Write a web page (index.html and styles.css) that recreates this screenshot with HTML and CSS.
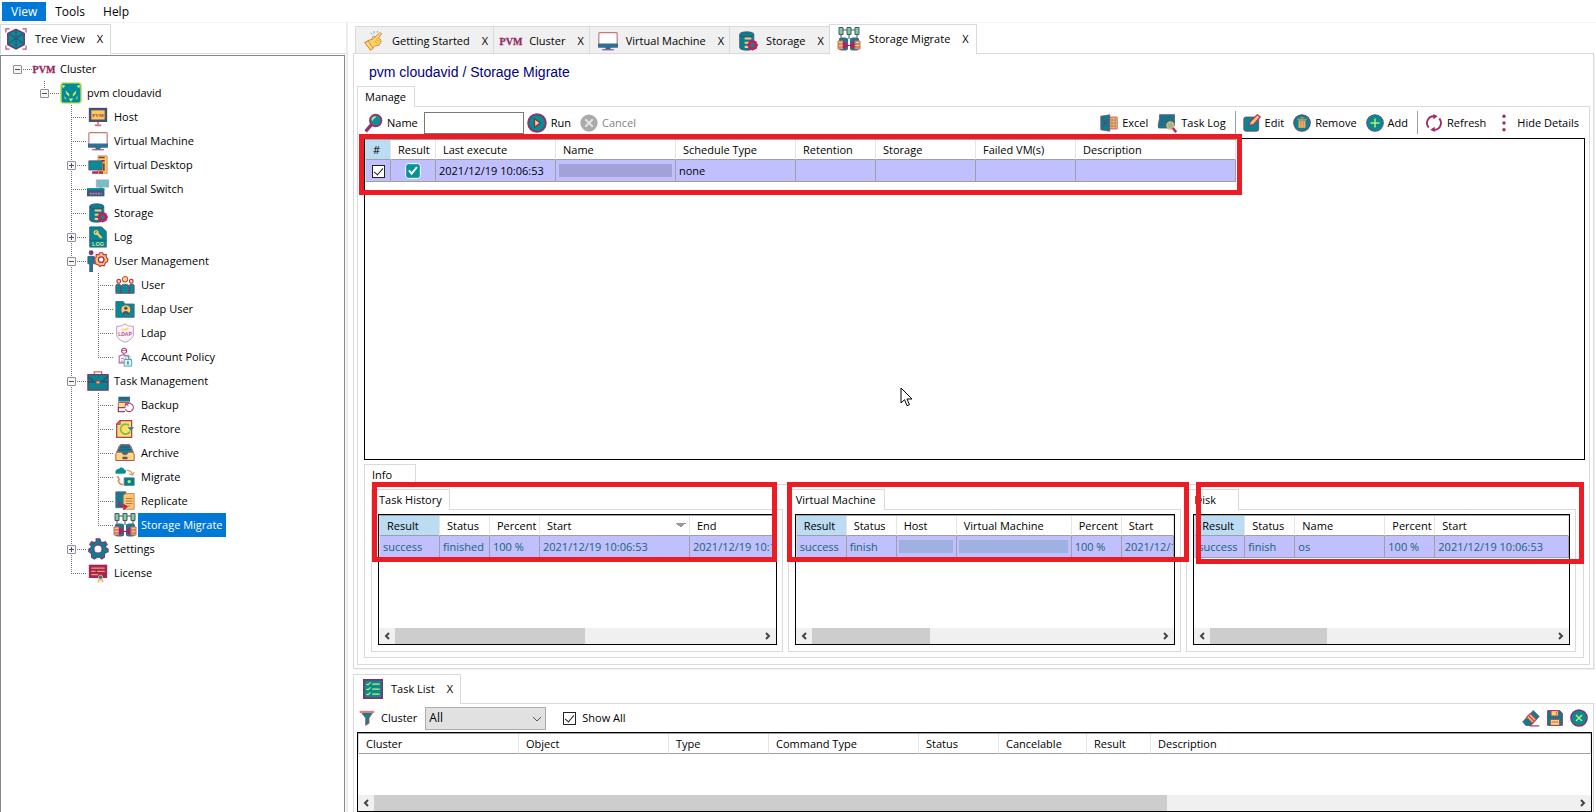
FILE: index.html
```
<!DOCTYPE html>
<html lang="en">
<head>
<meta charset="utf-8">
<title>Storage Migrate</title>
<link rel="stylesheet" href="styles.css">
</head>
<body>
<svg class="defs" aria-hidden="true">
  <symbol id="cube" viewBox="0 0 24 24"><path d="M12 1.500 21 6v12l-9 5-9-5V6z" fill="#078c96" stroke="#7b2b66" stroke-width="1.500"/><path d="M3 6l9 5 9-5M12 1.500V23M4 17l8-6 8 6" fill="none" stroke="#3f4f7d" stroke-width="1.300"/><path d="M1 5V1h4M19 1h4v4M23 19v4h-4M5 23H1v-4" fill="none" stroke="#b5507a" stroke-width="1.300"/></symbol>
  <symbol id="pvm" viewBox="0 0 24 24"><text x="12" y="16" text-anchor="middle" font-family="Liberation Serif" font-weight="700" font-size="10" fill="#962a63" stroke="#962a63" stroke-width=".3">PVM</text></symbol>
  <symbol id="cat" viewBox="0 0 24 24"><rect x="1" y="1" width="22" height="22" rx="2.500" fill="#028c94" stroke="#c9e265" stroke-width="1.500"/><path d="M2 3l4 1-3 3zM22 3l-4 1 3 3zM6 9l4 4v3l-3-3zM18 9l-4 4v3l3-3zM9.500 18h5L12 21.500zM5 15l2 4-2-1zM19 15l-2 4 2-1z" fill="#d6e76a"/></symbol>
  <symbol id="host" viewBox="0 0 24 24"><rect x="1" y="1" width="22" height="17" fill="#45516f"/><rect x="4" y="4" width="16" height="11" fill="#ffc85f"/><text x="12" y="12" text-anchor="middle" font-family="Liberation Serif" font-weight="700" font-size="6" fill="#963255">PVM</text><path d="M12 18v3M8 22h8" stroke="#c479a1" stroke-width="2"/></symbol>
  <symbol id="monitor" viewBox="0 0 24 24"><rect x="1" y="2" width="22" height="17" rx="1" fill="#fff" stroke="#c9767b" stroke-width="1.400"/><path d="M0 15h24v5H0z" fill="#317094"/><path d="M9 19h6v3H9z" fill="#067f91"/><path d="M5 22.500h14" stroke="#a94375" stroke-width="1.400"/></symbol>
  <symbol id="desktop" viewBox="0 0 24 24"><path d="M12 1h11v21H12z" fill="#ffc95c" stroke="#d18a55"/><path d="M13 3h7M16 7h4M19 10v9" stroke="#733b60" stroke-width="2"/><path d="M1 7h16v11H1z" fill="#048e98" stroke="#7c426e"/><path d="M5 21h7M13 21h5" stroke="#b12855" stroke-width="3"/></symbol>
  <symbol id="switch" viewBox="0 0 24 24"><path d="M10 2h14v8h-8v4h-2v-4h-4z" fill="#77bdc4" stroke="#bf9fc4" stroke-width=".5"/><path d="M0 12h19v8H0z" fill="#3b5a81"/><path d="M3 17h13" stroke="#d7799c" stroke-width="2" stroke-dasharray="2 1"/><path d="M0 12h19" stroke="#058e98" stroke-width="2"/></symbol>
  <symbol id="storage" viewBox="0 0 24 24"><path d="M2 4c0-4 17-4 17 0v16c0 4-17 4-17 0z" fill="#077f8d" stroke="#4e587c"/><path d="M2 5c2 3 15 3 17 0" fill="none" stroke="#493f6f"/><path d="M8 9h8M8 14h6M8 19h5" stroke="#ffc877" stroke-width="2.500"/><circle cx="17.500" cy="17" r="4.500" fill="#287989" stroke="#c31f61" stroke-width="2.800"/><path d="M17.500 10.500v13M11 17h13M13 12.500l9 9M22 12.500l-9 9" stroke="#c31f61" stroke-width="1.500"/><circle cx="17.500" cy="17" r="2.500" fill="#267b8b"/></symbol>
  <symbol id="log" viewBox="0 0 24 24"><path d="M3 1h13l5 5v17H3z" fill="#048890" stroke="#375978"/><path d="M10 7l6 6" stroke="#ffc66b" stroke-width="2.400"/><circle cx="10" cy="7" r="2" fill="none" stroke="#ffc66b" stroke-width="1.500"/><path d="M3 16h18" stroke="#285f75"/><text x="12" y="22" text-anchor="middle" font-family="Liberation Sans" font-weight="700" font-size="6" fill="#cce98a">LOG</text></symbol>
  <symbol id="gear" viewBox="0 0 24 24"><path d="M10 1h4l1 3 2 1 3-1 2 3-2 2 1 2 2 1v3l-3 1-1 2v3l-3 2-2-2h-3l-3 2-3-2v-3l-1-2-2-1v-3l2-1 1-2-2-2 2-3 3 1 2-1z" fill="#087f92" stroke="#7d3972" stroke-width="1.300"/><circle cx="12" cy="12" r="4.500" fill="#fff" stroke="#7d3972" stroke-width="1.300"/></symbol>
  <symbol id="usergear" viewBox="0 0 24 24"><circle cx="4.500" cy="3" r="2.600" fill="#7d3772"/><path d="M1 7h7v8H6v9H3v-9H1z" fill="#117e91" stroke="#55517c"/><path d="M14 3h3l1 2h3v3l2 2-1 3-2 1-1 3h-3l-2 1-2-2-3-1v-3l-1-2 2-2V5h3z" fill="#ffc466" stroke="#bb3155" stroke-width="1.200"/><circle cx="15.500" cy="10.500" r="3" fill="#fff" stroke="#a72c61" stroke-width="1.400"/></symbol>
  <symbol id="users" viewBox="0 0 24 24"><path d="M7 22v-8c0-4 10-4 10 0v8zM1 20v-7c0-3 6-3 6 0v9H1zM17 22v-9c0-3 6-3 6 0v9z" fill="#078b94" stroke="#833b66"/><circle cx="12" cy="5" r="3.200" fill="#ffdb79" stroke="#c65252" stroke-width="1.300"/><circle cx="4.500" cy="7.500" r="2.300" fill="#ffdb79" stroke="#b3345f" stroke-width="1.300"/><circle cx="19.500" cy="7.500" r="2.300" fill="#ffdb79" stroke="#b3345f" stroke-width="1.300"/></symbol>
  <symbol id="folder" viewBox="0 0 24 24"><path d="M1 3h9l2 3h11v16H1z" fill="#058994" stroke="#466583"/><circle cx="13" cy="13" r="6" fill="#ffc66a" stroke="#49566b"/><path d="M9 18c0-5 8-5 8 0z" fill="#355b76"/><circle cx="13" cy="11" r="2" fill="#355b76"/></symbol>
  <symbol id="shield" viewBox="0 0 24 24"><path d="M2 4c5 0 7-1 10-3 3 2 5 3 10 3v9c0 5-4 8-10 10C6 21 2 18 2 13z" fill="#faf5fa" stroke="#b78bad"/><text x="12" y="15" text-anchor="middle" font-family="Liberation Sans" font-weight="700" font-size="6" fill="#bb4e92">LDAP</text><path d="M8 8h6l2-2" fill="none" stroke="#fbd765" stroke-width="2"/></symbol>
  <symbol id="policy" viewBox="0 0 24 24"><circle cx="11" cy="4.500" r="3" fill="#fff" stroke="#b23c78" stroke-width="1.300"/><path d="M8 4h6" stroke="#b23c78"/><path d="M5 19v-8l5-2 6 2v8z" fill="#fff" stroke="#b45f99" stroke-width="1.300"/><path d="M7 14h4M7 17h3M11 9v3" stroke="#b45f99"/><path d="M13 15v-3c0-3 5-3 5 0v3" fill="none" stroke="#58a6ae"/><path d="M11 15h9v8h-9z" fill="#d6f1f3" stroke="#389ba7"/><path d="M15.500 17v4" stroke="#389ba7" stroke-width="2"/></symbol>
  <symbol id="brief" viewBox="0 0 24 24"><path d="M8 5V2h8v3" fill="none" stroke="#d56861" stroke-width="1.500"/><path d="M1 5h22v17H1z" fill="#08858f" stroke="#74386e" stroke-width="1.400"/><path d="M1 7l7 6h8l7-6M8 13H1M16 13h7" fill="none" stroke="#34496c" stroke-width="1.500"/><path d="M10 12h4v3h-4z" fill="#ffbf6b" stroke="#a34752"/></symbol>
  <symbol id="backup" viewBox="0 0 24 24"><path d="M4 2h14v6H4z" fill="#28788a"/><path d="M5 4h12" stroke="#3d4f72" stroke-width="2" stroke-dasharray="2 1"/><path d="M4 9h13v6H4z" fill="#ffe278" stroke="#9c3a6c"/><path d="M12 15H4v5h8" fill="none" stroke="#9c3a6c" stroke-width="1.500"/><path d="M13 12a5 5 0 1 1-.5 5M12 14l1-4 3 3" fill="#fff" stroke="#b93e72" stroke-width="1.300"/></symbol>
  <symbol id="restore" viewBox="0 0 24 24"><path d="M6 2h14v20H2V6z" fill="#ffe069" stroke="#b13c5d" stroke-width="1.500"/><path d="M2 6h4V2" fill="none" stroke="#b13c5d" stroke-width="1.500"/><path d="M17 8a6 6 0 1 0 1 7" fill="none" stroke="#79bd51" stroke-width="2"/><path d="M15 10h8l-4 4z" fill="#178d97"/></symbol>
  <symbol id="archive" viewBox="0 0 24 24"><path d="M5 4l2-2h10l2 2 3 7-3 4H5l-3-4z" fill="#1c7d8f" stroke="#65476f"/><path d="M6 5h12M5 8h14" stroke="#354c72"/><path d="M3 11h5l2 3h4l2-3h5l2 2v8H1v-8z" fill="#ffd977" stroke="#b9525d" stroke-width="1.200"/><path d="M9 18h6" stroke="#58556c" stroke-width="3"/><path d="M7 1L2 11M17 1l5 10" stroke="#c77b65"/></symbol>
  <symbol id="migrate" viewBox="0 0 24 24"><path d="M1 8c-2-4 2-6 4-6 2-3 6-1 6 1 3 0 3 5 0 5z" fill="#078e96"/><path d="M14 4c4 0 6 1 7 5m-4-1l4 2 2-4" fill="none" stroke="#da9c59" stroke-width="1.400"/><path d="M3 11l2 4-1 2c2 4 3 4 6 4" fill="none" stroke="#d68f69" stroke-width="2"/><path d="M11 13h12v9H11z" fill="#047f88" stroke="#49768e"/><circle cx="17" cy="17.500" r="2" fill="#bbed78"/></symbol>
  <symbol id="replicate" viewBox="0 0 24 24"><path d="M1 1h12v19H1z" fill="#187a8e" stroke="#546080"/><path d="M10 5l3-2h10v19H10z" fill="#ffc66b" stroke="#c27c5c"/><path d="M13 9h8M13 12h8M13 15h8M13 18h5" stroke="#a66b55"/><path d="M5 13c0 5 2 6 8 6m-3-3l4 3-4 3" fill="none" stroke="#b71e55" stroke-width="1.800"/></symbol>
  <symbol id="smigrate" viewBox="0 0 24 24"><path d="M4 3h16M4 8v4M12 8v4M20 8v4" stroke="#48516c"/><path d="M2 .5h4v7H2zM10 .5h4v7h-4zM18 .5h4v7h-4z" fill="#79cf98" stroke="#49546e"/><path d="M2 12c0-2 9-2 9 0v10c0 2-9 2-9 0zM13 12c0-2 9-2 9 0v10c0 2-9 2-9 0z" fill="#2c708b"/><path d="M1 14h5v8H1zM18 14h5v8h-5z" fill="#ffbd77" stroke="#bb765c"/><path d="M1 17h5M1 20h5M18 17h5M18 20h5" stroke="#a55f59"/><path d="M6 14l5 4h2l4-4v8l-4-3h-2l-5 3z" fill="#c51558"/></symbol>
  <symbol id="license" viewBox="0 0 24 24"><path d="M1 2h22v16H1z" fill="#a62458"/><path d="M4 6h16M4 10h5M11 10h9M4 14h8" stroke="#eea065" stroke-width="1.500"/><path d="M12 23l3-6 3 6" fill="none" stroke="#f2b15e" stroke-width="2"/><circle cx="15" cy="17" r="2.500" fill="#317489" stroke="#f4bd6a"/></symbol>
  <symbol id="hand" viewBox="0 0 24 24"><path d="M1 14l5-3 4-1 8-7c2-2 4 0 2 2l-3 4c3 0 4 2 3 5l-2 3-5 1-5 5z" fill="#ffd35c" stroke="#d88949" stroke-width="1.200"/><path d="M1 14l4-2 6 9-3 2z" fill="#ffdb72" stroke="#d6773f"/><path d="M9 10l2-4 3 1M13 12l3 3M15 10l3 3" fill="none" stroke="#d88949"/><path d="M8 2l2 2M12 0v3M16 0v2" stroke="#46a4b3"/></symbol>
  <symbol id="search" viewBox="0 0 24 24"><path d="M2 22l7-8" stroke="#9b2d68" stroke-width="4"/><circle cx="14" cy="9" r="7" fill="#118d93" stroke="#963469" stroke-width="2"/><path d="M10 9c0-3 2-4 4-4" fill="none" stroke="#bde992" stroke-width="2"/></symbol>
  <symbol id="run" viewBox="0 0 24 24"><circle cx="12" cy="12" r="10.500" fill="#058c94" stroke="#88396e" stroke-width="2.500"/><path d="M9 7l7 5-7 5z" fill="#ffd26a" stroke="#833255" stroke-width="1.500"/></symbol>
  <symbol id="cancel" viewBox="0 0 24 24"><circle cx="12" cy="12" r="11.500" fill="#aaa"/><path d="M7 7l10 10M17 7L7 17" stroke="#e4e4e4" stroke-width="2.500"/></symbol>
  <symbol id="excel" viewBox="0 0 24 24"><path d="M12 4h11v16H12z" fill="#ffc46d" stroke="#a5525e"/><path d="M12 8h10M12 12h10M12 16h10M16 4v16M20 4v16" stroke="#b76b52"/><path d="M1 3l12-2v22L1 21z" fill="#087f8c" stroke="#9a3a70"/><path d="M4 8l6 8M10 8l-6 8" stroke="#704068" stroke-width="1.500"/></symbol>
  <symbol id="tasklog" viewBox="0 0 24 24"><path d="M3 2h18v13l-4 3H2c-2-3 2-10 1-16z" fill="#1c748a" stroke="#5a5880"/><path d="M5 6h13M4 10h13M4 14h10" stroke="#3a6184"/><circle cx="16" cy="15" r="4" fill="#86bca5" stroke="#efb065" stroke-width="2"/><path d="M19 18l4 5" stroke="#ba2c5b" stroke-width="3"/></symbol>
  <symbol id="edit" viewBox="0 0 24 24"><rect x="1" y="4" width="20" height="19" rx="3" fill="#09858f" stroke="#85386e"/><path d="M8 15l2-5L19 1l4 3-9 10z" fill="#ffc573" stroke="#b13159" stroke-width="1.500"/></symbol>
  <symbol id="trash" viewBox="0 0 24 24"><circle cx="12" cy="12" r="11" fill="#07848f" stroke="#65496f" stroke-width="1.500"/><path d="M8 9h8v9H8zM6 7h12M10 5h4" fill="#ffc66b" stroke="#d99c5f" stroke-width="1.500"/><path d="M10.500 9v8M13.500 9v8" stroke="#9d5457"/></symbol>
  <symbol id="add" viewBox="0 0 24 24"><circle cx="12" cy="12" r="11" fill="#058b93" stroke="#65506f" stroke-width="1.500"/><path d="M12 6v12M6 12h12" stroke="#c4ea69" stroke-width="2"/></symbol>
  <symbol id="refresh" viewBox="0 0 24 24"><path d="M5 18A9 9 0 0 1 12 3M19 6a9 9 0 0 1-7 15" fill="none" stroke="#a02c6b" stroke-width="2.500"/><path d="M11 0l6 3-6 4zM13 17v7l-6-3z" fill="#a02c6b"/></symbol>
  <symbol id="dots" viewBox="0 0 24 24"><circle cx="12" cy="3" r="2.300" fill="#a02c6b"/><circle cx="12" cy="12" r="2.300" fill="#a02c6b"/><circle cx="12" cy="21" r="2.300" fill="#a02c6b"/></symbol>
  <symbol id="tasks" viewBox="0 0 24 24"><rect x="1" y="1" width="22" height="22" fill="#078a90" stroke="#80306e" stroke-width="2"/><path d="M4 6l2 1 3-3M4 12l2 1 3-3M4 18l2 1 3-3M11 6h9M11 12h9M11 18h9" fill="none" stroke="#d0eb65" stroke-width="1.500"/></symbol>
  <symbol id="filter" viewBox="0 0 24 24"><path d="M2 2h20l-7 10v8l-5 3V12z" fill="#107f8e" stroke="#a6516f" stroke-width="1.300"/><path d="M1 3h22" stroke="#df8075" stroke-width="3"/></symbol>
  <symbol id="eraser" viewBox="0 0 24 24"><path d="M1 17L15 2l8 8-11 12H5z" fill="#0a7e8e" stroke="#69476e"/><path d="M6 11l8 8 5-5-8-8z" fill="#ffc568" stroke="#c04e58" stroke-width="1.500"/><path d="M9 9l7 7M10 22.500h13" stroke="#b53b65" stroke-width="1.500"/></symbol>
  <symbol id="save" viewBox="0 0 24 24"><path d="M1 1h18l4 4v18H1z" fill="#057f8d" stroke="#743c6c" stroke-width="1.500"/><path d="M6 1h11v8H6zM5 14h14v9H5z" fill="#ffd06e" stroke="#a44162" stroke-width="1.500"/><path d="M14 3v4M7 18h10" stroke="#c16b5b" stroke-width="1.500"/></symbol>
  <symbol id="close" viewBox="0 0 24 24"><circle cx="12" cy="12" r="10.800" fill="#068b93" stroke="#84366b" stroke-width="2"/><path d="M8 8l8 8M16 8l-8 8" stroke="#bfe870" stroke-width="2"/></symbol>
  <symbol id="ok" viewBox="0 0 24 24"><rect x="1" y="1" width="22" height="22" rx="4" fill="#0a9297" stroke="#fff" stroke-width="1.500"/><path d="M6 11l4 5 8-10" fill="none" stroke="#fff" stroke-width="3"/></symbol>
  <symbol id="left" viewBox="0 0 8 8"><path d="M6 1L3 4l3 3" fill="none" stroke="#444" stroke-width="2"/></symbol>
  <symbol id="right" viewBox="0 0 8 8"><path d="M2 1l3 3-3 3" fill="none" stroke="#444" stroke-width="2"/></symbol>
</svg>

<nav class="menubar">
  <button class="menu menu-on">View</button>
  <button class="menu">Tools</button>
  <button class="menu">Help</button>
</nav>

<div class="workspace">
  <aside class="side">
    <div class="tabs">
      <div class="tab tab-on"><svg class="i22"><use href="#cube"/></svg><span>Tree View</span><button class="x" aria-label="Close Tree View">X</button></div>
    </div>
    <div class="tree">
      <ul class="root">
        <li>
          <div class="node"><button class="exp" aria-label="Collapse Cluster"></button><svg class="i24"><use href="#pvm"/></svg><span>Cluster</span></div>
          <ul>
            <li>
              <div class="node"><button class="exp" aria-label="Collapse pvm cloudavid"></button><svg class="i22"><use href="#cat"/></svg><span>pvm cloudavid</span></div>
              <ul>
                <li><div class="node"><i></i><svg class="i20"><use href="#host"/></svg><span>Host</span></div></li>
                <li><div class="node"><i></i><svg class="i20"><use href="#monitor"/></svg><span>Virtual Machine</span></div></li>
                <li><div class="node"><button class="exp plus" aria-label="Expand Virtual Desktop"></button><svg class="i20"><use href="#desktop"/></svg><span>Virtual Desktop</span></div></li>
                <li><div class="node"><i></i><svg class="i22"><use href="#switch"/></svg><span>Virtual Switch</span></div></li>
                <li><div class="node"><i></i><svg class="i20"><use href="#storage"/></svg><span>Storage</span></div></li>
                <li><div class="node"><button class="exp plus" aria-label="Expand Log"></button><svg class="i22"><use href="#log"/></svg><span>Log</span></div></li>
                <li>
                  <div class="node"><button class="exp" aria-label="Collapse User Management"></button><svg class="i22"><use href="#usergear"/></svg><span>User Management</span></div>
                  <ul>
                    <li><div class="node"><i></i><svg class="i20"><use href="#users"/></svg><span>User</span></div></li>
                    <li><div class="node"><i></i><svg class="i20"><use href="#folder"/></svg><span>Ldap User</span></div></li>
                    <li><div class="node"><i></i><svg class="i20"><use href="#shield"/></svg><span>Ldap</span></div></li>
                    <li><div class="node"><i></i><svg class="i20"><use href="#policy"/></svg><span>Account Policy</span></div></li>
                  </ul>
                </li>
                <li>
                  <div class="node"><button class="exp" aria-label="Collapse Task Management"></button><svg class="i22"><use href="#brief"/></svg><span>Task Management</span></div>
                  <ul>
                    <li><div class="node"><i></i><svg class="i20"><use href="#backup"/></svg><span>Backup</span></div></li>
                    <li><div class="node"><i></i><svg class="i20"><use href="#restore"/></svg><span>Restore</span></div></li>
                    <li><div class="node"><i></i><svg class="i20"><use href="#archive"/></svg><span>Archive</span></div></li>
                    <li><div class="node"><i></i><svg class="i20"><use href="#migrate"/></svg><span>Migrate</span></div></li>
                    <li><div class="node"><i></i><svg class="i20"><use href="#replicate"/></svg><span>Replicate</span></div></li>
                    <li><div class="node"><i></i><svg class="i24"><use href="#smigrate"/></svg><span class="picked">Storage Migrate</span></div></li>
                  </ul>
                </li>
                <li><div class="node"><button class="exp plus" aria-label="Expand Settings"></button><svg class="i22"><use href="#gear"/></svg><span>Settings</span></div></li>
                <li><div class="node"><i></i><svg class="i20"><use href="#license"/></svg><span>License</span></div></li>
              </ul>
            </li>
          </ul>
        </li>
      </ul>
    </div>
  </aside>

  <main class="content">
    <section class="editor">
      <div class="tabs editor-tabs">
        <div class="tab"><svg class="i20"><use href="#hand"/></svg><span>Getting Started</span><button class="x" aria-label="Close Getting Started">X</button></div>
        <div class="tab tight"><svg class="i24"><use href="#pvm"/></svg><span>Cluster</span><button class="x" aria-label="Close Cluster">X</button></div>
        <div class="tab"><svg class="i20"><use href="#monitor"/></svg><span>Virtual Machine</span><button class="x" aria-label="Close Virtual Machine">X</button></div>
        <div class="tab"><svg class="i20"><use href="#storage"/></svg><span>Storage</span><button class="x" aria-label="Close Storage">X</button></div>
        <div class="tab tab-on"><svg class="i24"><use href="#smigrate"/></svg><span>Storage Migrate</span><button class="x" aria-label="Close Storage Migrate">X</button></div>
      </div>
      <div class="page">
        <h1>pvm cloudavid / Storage Migrate</h1>
        <div class="subtabs"><div class="subtab manage">Manage</div></div>
        <div class="panel">
          <div class="toolbar">
            <svg class="i20"><use href="#search"/></svg>
            <label for="name">Name</label>
            <input id="name" class="field" type="text">
            <button class="tool"><svg class="i20"><use href="#run"/></svg>Run</button>
            <button class="tool off" disabled><svg class="i18"><use href="#cancel"/></svg>Cancel</button>
            <div class="spacer"></div>
            <button class="tool"><svg class="i18"><use href="#excel"/></svg>Excel</button>
            <button class="tool"><svg class="i20"><use href="#tasklog"/></svg>Task Log</button>
            <div class="rule"></div>
            <button class="tool"><svg class="i18"><use href="#edit"/></svg>Edit</button>
            <button class="tool"><svg class="i18"><use href="#trash"/></svg>Remove</button>
            <button class="tool"><svg class="i18"><use href="#add"/></svg>Add</button>
            <div class="rule"></div>
            <button class="tool"><svg class="i18"><use href="#refresh"/></svg>Refresh</button>
            <button class="tool"><svg class="i18"><use href="#dots"/></svg>Hide Details</button>
          </div>
          <div class="marked grow">
            <div class="list">
              <table class="fit">
                <colgroup><col class="c25"><col class="c45"><col class="c120"><col class="c120"><col class="c120"><col class="c80"><col class="c100"><col class="c100"><col class="c160"></colgroup>
                <thead><tr><th class="sorted">#</th><th>Result</th><th>Last execute</th><th>Name</th><th>Schedule Type</th><th>Retention</th><th>Storage</th><th>Failed VM(s)</th><th>Description</th></tr></thead>
                <tbody><tr><td class="mid"><input class="check" type="checkbox" checked aria-label="Select row"></td><td class="mid"><svg class="i16"><use href="#ok"/></svg></td><td>2021/12/19 10:06:53</td><td><div class="mask"></div></td><td>none</td><td></td><td></td><td></td><td></td></tr></tbody>
              </table>
            </div>
            <div class="mark mark-main"></div>
          </div>
          <div class="subtabs info-tabs"><div class="subtab info">Info</div></div>
          <div class="groups">
            <section class="group marked">
              <div class="subtabs"><div class="subtab history">Task History</div></div>
              <div class="group-body">
                <div class="list teal">
                  <table>
                    <colgroup><col class="c60"><col class="c50"><col class="c50"><col class="c150"><col></colgroup>
                    <thead><tr><th class="sorted">Result</th><th>Status</th><th>Percent</th><th class="desc">Start</th><th>End</th></tr></thead>
                    <tbody><tr><td>success</td><td>finished</td><td>100 %</td><td>2021/12/19 10:06:53</td><td>2021/12/19 10:1</td></tr></tbody>
                  </table>
                  <div class="scroll"><button aria-label="Scroll left"><svg class="i8"><use href="#left"/></svg></button><div class="track"><div class="thumb half"></div></div><button aria-label="Scroll right"><svg class="i8"><use href="#right"/></svg></button></div>
                </div>
              </div>
              <div class="mark mark-history"></div>
            </section>
            <section class="group marked">
              <div class="subtabs"><div class="subtab vm">Virtual Machine</div></div>
              <div class="group-body">
                <div class="list teal">
                  <table>
                    <colgroup><col class="c50"><col class="c50"><col class="c60"><col class="c115"><col class="c50"><col></colgroup>
                    <thead><tr><th class="sorted">Result</th><th>Status</th><th>Host</th><th>Virtual Machine</th><th>Percent</th><th>Start</th></tr></thead>
                    <tbody><tr><td>success</td><td>finish</td><td><div class="mask blue"></div></td><td><div class="mask blue"></div></td><td>100 %</td><td>2021/12/1</td></tr></tbody>
                  </table>
                  <div class="scroll"><button aria-label="Scroll left"><svg class="i8"><use href="#left"/></svg></button><div class="track"><div class="thumb third"></div></div><button aria-label="Scroll right"><svg class="i8"><use href="#right"/></svg></button></div>
                </div>
              </div>
              <div class="mark mark-vm"></div>
            </section>
            <section class="group marked">
              <div class="subtabs"><div class="subtab disk">Disk</div></div>
              <div class="group-body">
                <div class="list teal">
                  <table>
                    <colgroup><col class="c50"><col class="c50"><col class="c90"><col class="c50"><col></colgroup>
                    <thead><tr><th class="sorted">Result</th><th>Status</th><th>Name</th><th>Percent</th><th>Start</th></tr></thead>
                    <tbody><tr><td>success</td><td>finish</td><td>os</td><td>100 %</td><td>2021/12/19 10:06:53</td></tr></tbody>
                  </table>
                  <div class="scroll"><button aria-label="Scroll left"><svg class="i8"><use href="#left"/></svg></button><div class="track"><div class="thumb third"></div></div><button aria-label="Scroll right"><svg class="i8"><use href="#right"/></svg></button></div>
                </div>
              </div>
              <div class="mark mark-disk"></div>
            </section>
          </div>
        </div>
      </div>
    </section>

    <section class="tasklist">
      <div class="tabs"><div class="tab tab-on"><svg class="i20"><use href="#tasks"/></svg><span>Task List</span><button class="x" aria-label="Close Task List">X</button></div></div>
      <div class="task-body">
        <div class="filters">
          <svg class="i16"><use href="#filter"/></svg>
          <label for="cluster">Cluster</label>
          <div class="pick"><select id="cluster"><option>All</option></select><svg class="arrow" viewBox="0 0 10 10"><path d="M1 3l4 4 4-4" fill="none" stroke="#555"/></svg></div>
          <input id="all" class="check" type="checkbox" checked><label for="all">Show All</label>
          <div class="spacer"></div>
          <button class="tool" aria-label="Clear"><svg class="i18"><use href="#eraser"/></svg></button>
          <button class="tool" aria-label="Save"><svg class="i16"><use href="#save"/></svg></button>
          <button class="tool" aria-label="Close"><svg class="i18"><use href="#close"/></svg></button>
        </div>
        <div class="list">
          <table>
            <colgroup><col class="c160"><col class="c150"><col class="c100"><col class="c150"><col class="c80"><col class="c88"><col class="c64"><col></colgroup>
            <thead><tr><th>Cluster</th><th>Object</th><th>Type</th><th>Command Type</th><th>Status</th><th>Cancelable</th><th>Result</th><th>Description</th></tr></thead>
          </table>
          <div class="scroll"><button aria-label="Scroll left"><svg class="i8"><use href="#left"/></svg></button><div class="track"><div class="thumb wide"></div></div><button aria-label="Scroll right"><svg class="i8"><use href="#right"/></svg></button></div>
        </div>
      </div>
    </section>
  </main>
</div>
<svg class="pointer" viewBox="0 0 13 20"><path d="M1 1v15l3.500-3.300 2.500 6 2.500-1-2.500-5.700h5z" fill="#fff" stroke="#000"/></svg>
</body>
</html>
```

FILE: styles.css
```
* { box-sizing: border-box; }
body {
  margin: 0;
  height: 100vh;
  display: flex;
  flex-direction: column;
  overflow: hidden;
  background: #fff;
  color: #000;
  font: 11px/16px "Open Sans", "Noto Sans", sans-serif;
}
button, input, select { font: inherit; color: inherit; }
button { border: 0; padding: 0; background: none; white-space: nowrap; }
ul { margin: 0; padding: 0; list-style: none; }
svg { flex: none; display: block; }
.defs { display: none; }
.i8 { width: 8px; height: 8px; }
.i16 { width: 16px; height: 16px; }
.i18 { width: 18px; height: 18px; }
.i20 { width: 20px; height: 20px; }
.i22 { width: 22px; height: 22px; }
.i24 { width: 24px; height: 24px; }
.spacer { flex: 1; }

/* menu bar */
.menubar { display: flex; height: 23px; padding: 2px 2px 1px; border-bottom: 1px solid #f4f4f4; font-size: 12px; }
.menu { padding: 0 9px; }
.menu-on { background: #0078d7; color: #fff; }

.workspace { flex: 1; display: flex; min-height: 0; }

/* document tabs */
.tabs { display: flex; align-items: flex-end; height: 31px; position: relative; }
.tabs::after { content: ""; position: absolute; inset: auto 0 0; border-bottom: 1px solid #dadada; }
.tab {
  display: flex;
  align-items: center;
  height: 28px;
  padding: 2px 5px 0 8px;
  background: #f0f0f0;
  border: 1px solid #dadada;
  border-right: 0;
  white-space: nowrap;
}
.tab svg { margin-right: 8px; }
.tight svg { margin: 0 6px 0 -3px; }
.tab-on {
  position: relative;
  z-index: 1;
  height: 30px;
  padding: 0 7px 1px;
  background: #fff;
  border: 1px solid #dadada;
  border-bottom: 0;
}
.x { margin-left: 12px; }

/* tree */
.side { flex: 0 0 348px; display: flex; flex-direction: column; border-right: 2px solid #ececec; }
.side .tab-on { padding-left: 4px; }
.tree { flex: 1; margin: 1px 1px 0 0; border: 1px solid #828790; border-bottom: 0; padding: 1px 0 0 3px; }
.tree ul ul { margin-left: 27px; }
.tree li { position: relative; }
.tree ul ul > li::before {
  content: "";
  position: absolute;
  left: 13px;
  top: 0;
  bottom: 0;
  width: 1px;
  background: repeating-linear-gradient(#777 0 1px, transparent 1px 2px);
}
.tree ul ul > li:last-child::before { bottom: auto; height: 12px; }
.node { position: relative; display: grid; grid-template-columns: 27px 26px auto; justify-content: start; align-items: center; height: 24px; }
.node::before {
  content: "";
  position: absolute;
  left: 13px;
  top: 12px;
  width: 16px;
  height: 1px;
  background: repeating-linear-gradient(90deg, #777 0 1px, transparent 1px 2px);
}
.node > svg { justify-self: center; position: relative; }
.node > span { padding: 4px 3px; white-space: nowrap; }
.node > .picked { background: #0078d7; color: #fff; }
.exp {
  position: relative;
  width: 9px;
  height: 9px;
  justify-self: center;
  border: 1px solid #919191;
  border-radius: 1px;
  background: linear-gradient(#3c5078, #3c5078) center / 5px 1px no-repeat, #f6f6f6;
}
.plus { background: linear-gradient(#3c5078, #3c5078) center / 5px 1px no-repeat, linear-gradient(#3c5078, #3c5078) center / 1px 5px no-repeat, #f6f6f6; }

/* right side */
.content { flex: 1; min-width: 0; display: flex; flex-direction: column; gap: 4px; padding: 0 2px 0 5px; }
.editor { flex: 1; min-height: 0; display: flex; flex-direction: column; }
.editor-tabs { padding-left: 2px; }
.page {
  flex: 1;
  min-height: 0;
  display: flex;
  flex-direction: column;
  padding: 7px 3px 3px;
  border: 1px solid #dadada;
  border-top: 0;
  box-shadow: 1px 1px #f0f0f0;
}
h1 { margin: 0 0 3px 12px; color: #000080; font: 14px/22px "Liberation Sans", Arial, sans-serif; }
.subtabs { display: flex; position: relative; height: 21px; }
.subtabs::after { content: ""; position: absolute; inset: auto 0 0; border-bottom: 1px solid #dadada; }
.subtab { position: relative; z-index: 1; padding: 2px 7px; background: #fff; border: 1px solid #dadada; border-bottom: 0; white-space: nowrap; }
.manage { min-width: 58px; }
.info { min-width: 52px; }
.history { min-width: 76px; }
.vm { min-width: 97px; }
.disk { min-width: 53px; }
.panel {
  flex: 1;
  min-height: 0;
  display: flex;
  flex-direction: column;
  padding: 0 4px 6px 6px;
  border: 1px solid #dadada;
  border-top: 0;
}
.toolbar { display: flex; align-items: center; height: 31px; padding-right: 6px; }
.tool { display: flex; align-items: center; gap: 4px; }
.toolbar label { margin: 0 6px 0 3px; }
.toolbar .tool { margin-left: 9px; }
.toolbar .field + .tool { margin-left: 3px; }
.field { width: 100px; height: 22px; border: 1px solid #7a7a7a; }
.off { color: #838383; }
.rule { width: 1px; height: 23px; margin-left: 9px; background: #a0a0a0; }
.rule + .tool { margin-left: 7px; }

/* lists */
.list { flex: 1; min-height: 0; display: flex; flex-direction: column; overflow: hidden; border: 1px solid #000; }
table { width: 100%; table-layout: fixed; border-collapse: separate; border-spacing: 0; border-top: 1px solid #a0a0a0; border-left: 1px solid #dadada; }
.fit { width: 871px; }
th, td { overflow: hidden; white-space: nowrap; text-align: left; font-weight: 400; }
th { height: 20px; padding: 1px 0 0 7px; border-right: 1px solid #e5e5e5; border-bottom: 1px solid #a0a0a0; }
td { height: 22px; padding: 0 0 0 3px; background: #c0c0ff; border-right: 1px solid #a0a0a0; border-bottom: 1px solid #a0a0a0; }
.teal td { color: #17656c; }
.sorted { background: #bcdcf4; }
.desc { background: linear-gradient(to bottom left, #999 50%, transparent 50%) right 8px center / 5px 5px no-repeat, linear-gradient(to bottom right, #999 50%, transparent 50%) right 3px center / 5px 5px no-repeat; }
.mid { padding: 0; text-align: center; }
.mid > * { margin: 0 auto; vertical-align: middle; }
.mask { height: 13px; margin-right: 3px; background: #a2a2d8; }
.blue { margin-left: -1px; background: #9fb1df; }
.c25 { width: 25px; } .c45 { width: 45px; } .c50 { width: 50px; } .c60 { width: 60px; }
.c64 { width: 64px; } .c80 { width: 80px; } .c88 { width: 88px; } .c90 { width: 90px; }
.c100 { width: 100px; } .c115 { width: 115px; } .c120 { width: 120px; } .c150 { width: 150px; } .c160 { width: 160px; }
.check {
  appearance: none;
  width: 13px;
  height: 13px;
  margin: 0;
  border: 1px solid #222;
  background: #fff;
  position: relative;
}
.check:checked::after { content: ""; position: absolute; left: 3px; top: 0; width: 4px; height: 8px; border: solid #222; border-width: 0 1px 1px 0; transform: rotate(40deg); }
.scroll { display: flex; height: 16px; margin-top: auto; background: #f0f0f0; }
.scroll button { width: 16px; display: grid; place-items: center; }
.track { flex: 1; }
.thumb { height: 100%; background: #cdcdcd; }
.half { width: 52%; }
.third { width: 34%; }
.wide { width: 66%; }

/* info groups */
.marked { position: relative; display: flex; flex-direction: column; }
.grow { flex: 1; min-height: 0; }
.info-tabs { margin: 4px 1px 0 0; }
.groups {
  display: grid;
  grid-template-columns: 412fr 394fr 390fr;
  gap: 5px;
  height: 173px;
  margin-right: 1px;
  padding: 4px 7px 5px 6px;
  border: 1px solid #dadada;
  border-top: 0;
}
.group { min-width: 0; }
.group-body { flex: 1; min-height: 0; display: flex; padding: 4px 5px 6px 6px; border: 1px solid #dadada; border-top: 0; }
.group-body .list { min-width: 0; }

/* highlight frames */
.mark { position: absolute; z-index: 2; border: 5px solid #ed1c24; pointer-events: none; }
.mark-main { left: -5px; top: -4px; width: 883px; height: 61px; }
.mark-history { left: 1px; right: 6px; top: -7px; height: 80px; }
.mark-vm { left: -1px; right: -8px; top: -7px; height: 80px; }
.mark-disk { left: 10px; right: -8px; top: -7px; height: 82px; }

/* task list */
.tasklist { flex: 0 0 139px; display: flex; flex-direction: column; }
.tasklist .tab-on { padding-left: 9px; }
.task-body { flex: 1; min-height: 0; display: flex; flex-direction: column; padding: 0 1px 0 3px; border: 1px solid #dadada; border-width: 0 1px; }
.filters { display: flex; align-items: center; height: 28px; padding: 0 4px 0 2px; }
.filters > label { margin-left: 6px; }
.pick { position: relative; margin: 0 17px 0 8px; }
.pick select { display: block; width: 121px; height: 23px; padding: 0 3px; appearance: none; background: #e1e1e1; border: 1px solid #adadad; border-radius: 0; font-size: 12px; }
.arrow { position: absolute; right: 4px; top: 7px; width: 10px; height: 10px; pointer-events: none; }
.filters .tool { margin-left: 7px; }

.pointer { position: absolute; left: 900px; top: 387px; width: 13px; height: 20px; }
```
